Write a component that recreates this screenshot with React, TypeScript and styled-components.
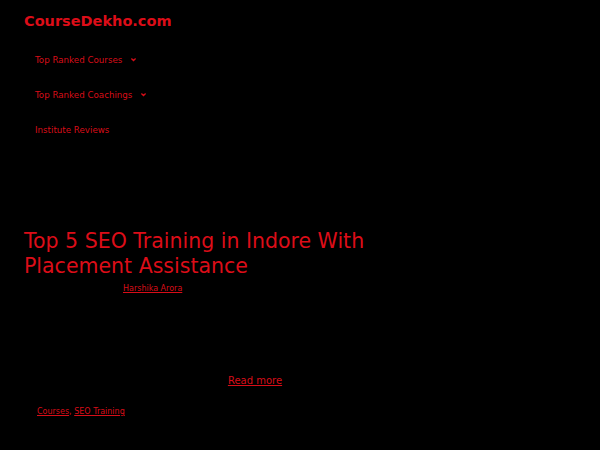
import styled, { createGlobalStyle } from 'styled-components';

const GlobalStyle = createGlobalStyle`
  html, body {
    margin: 0;
    padding: 0;
    background: #000;
  }
  body {
    font-family: "DejaVu Sans", Verdana, sans-serif;
    color: #d80d18;
  }
  a {
    color: #d80d18;
  }
`;

const Page = styled.div`
  width: 600px;
  height: 450px;
  overflow: hidden;
  background: #000;
`;

const Header = styled.header`
  padding: 11px 24px 0;
`;

const Logo = styled.a`
  display: inline-block;
  font-size: 14.5px;
  font-weight: bold;
  line-height: 18px;
  text-decoration: none;
  color: #dc0d18;
`;

const Nav = styled.ul`
  list-style: none;
  margin: 0;
  padding: 12px 0 0 11px;
  display: flex;
  flex-direction: column;
`;

const NavItem = styled.li`
  height: 35px;
  display: flex;
  align-items: center;
  font-size: 8.7px;
  a {
    text-decoration: none;
  }
`;

const Chevron = styled.svg`
  width: 7px;
  height: 7px;
  margin-left: 8px;
`;

const Article = styled.article`
  padding: 82px 24px 0;
`;

const Title = styled.h1`
  margin: 0;
  font-size: 20.5px;
  font-weight: normal;
  line-height: 25px;
  color: #dc0d18;
  max-width: 380px;
`;

const Meta = styled.div`
  font-size: 8px;
  line-height: 12px;
  padding: 4px 0 0 99px;
`;

const ReadMore = styled.div`
  text-align: center;
  font-size: 10px;
  padding: 80px 0 0;
  width: 462px;
`;

const Tags = styled.div`
  font-size: 8px;
  padding: 21px 0 0 13px;
`;

function Caret() {
  return (
    <Chevron viewBox="0 0 10 10">
      <path d="M2 3.5 L5 6.5 L8 3.5" fill="none" stroke="#d80d18" strokeWidth="1.8" />
    </Chevron>
  );
}

export default function App() {
  return (
    <Page>
      <GlobalStyle />
      <Header>
        <Logo href="#">CourseDekho.com</Logo>
        <Nav>
          <NavItem>
            <a href="#">Top Ranked Courses</a>
            <Caret />
          </NavItem>
          <NavItem>
            <a href="#">Top Ranked Coachings</a>
            <Caret />
          </NavItem>
          <NavItem>
            <a href="#">Institute Reviews</a>
          </NavItem>
        </Nav>
      </Header>
      <Article>
        <Title>Top 5 SEO Training in Indore With Placement Assistance</Title>
        <Meta>
          <a href="#">Harshika Arora</a>
        </Meta>
        <ReadMore>
          <a href="#">Read more</a>
        </ReadMore>
        <Tags>
          <a href="#">Courses</a>, <a href="#">SEO Training</a>
        </Tags>
      </Article>
    </Page>
  );
}
